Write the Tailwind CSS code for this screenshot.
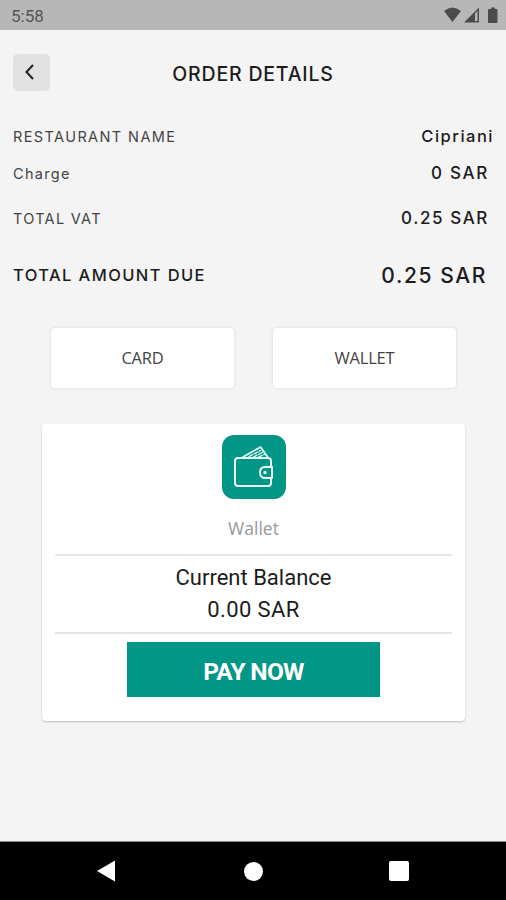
<!DOCTYPE html>
<html lang="en">
<head>
<meta charset="utf-8">
<title>Order Details</title>
<script src="https://cdn.jsdelivr.net/npm/@tailwindcss/browser@4"></script>
</head>
<body class="w-[506px] h-[900px] overflow-hidden bg-[#f4f4f4] font-['Inter',sans-serif] text-[#1c1c1c] flex flex-col">
  <div class="h-[30px] shrink-0 bg-[#b7b7b7] flex items-center justify-between pl-[11px] pr-[8px] text-[#555]">
    <span class="font-['Roboto',sans-serif] text-[17px] leading-[20px] pt-[2px]">5:58</span>
    <svg class="w-[56px] h-[18px]" viewBox="0 0 56 18" fill="#4b4b4b">
      <path d="M2 5Q10.500 -2 19 5L10.500 16Z"/>
      <path d="M37 1.500V16.500H22Z"/><path d="M33 7.500L35.500 5V15H33Z" fill="#b7b7b7"/>
      <path d="M47 3H49V1.500H53V3H54.500Q55.500 3 55.500 4V16Q55.500 17 54.500 17H47Q46 17 46 16V4Q46 3 47 3Z"/>
    </svg>
  </div>
  <header class="h-[88px] shrink-0 grid grid-cols-[37px_1fr_37px] items-center px-[13px] pb-[4px]">
    <button class="w-[37px] h-[37px] rounded-[5px] bg-[#e1e1e1] flex items-center justify-center pr-[3px]">
      <svg class="w-[16px] h-[18px]" viewBox="0 0 16 18" fill="none" stroke="#222" stroke-width="2"><path d="M11 2L4.500 9L11 16"/></svg>
    </button>
    <h1 class="text-center text-[19.500px] leading-[24px] font-medium pt-[3px] whitespace-nowrap tracking-[0.8px]">ORDER DETAILS</h1>
  </header>
  <section class="shrink-0 pl-[13px] whitespace-nowrap">
    <div class="h-[36px] flex items-center justify-between pr-[12px] pt-[1px]">
      <span class="text-[14.500px] text-[#444] tracking-[1.4px]">RESTAURANT NAME</span>
      <span class="text-[16.500px] font-medium tracking-[1.5px]">Cipriani</span>
    </div>
    <div class="h-[38px] flex items-center justify-between pr-[17px] pt-[2px]">
      <span class="text-[14.500px] text-[#444] tracking-[1.3px]">Charge</span>
      <span class="text-[17px] font-medium tracking-[1.7px]">0 SAR</span>
    </div>
    <div class="h-[52px] flex items-center justify-between pr-[17px] pt-[2px]">
      <span class="text-[14.500px] text-[#444] tracking-[1.3px]">TOTAL VAT</span>
      <span class="text-[17px] font-medium tracking-[1.6px]">0.25 SAR</span>
    </div>
    <div class="h-[61px] flex items-center justify-between pr-[19px] pt-[1px]">
      <span class="text-[16.500px] font-medium tracking-[1.4px]">TOTAL AMOUNT DUE</span>
      <span class="text-[21px] font-medium tracking-[1.600px] pt-[2px]">0.25 SAR</span>
    </div>
  </section>
  <div class="flex shrink-0 pl-[51px] pt-[23px] gap-[39px] font-['Open_Sans',sans-serif] text-[#444]">
    <button class="w-[183px] h-[60px] rounded-[4px] bg-white shadow-[0_0_2px_1px_#e4e4e4] text-[16.500px] tracking-[-0.200px]">CARD</button>
    <button class="w-[183px] h-[60px] rounded-[4px] bg-white shadow-[0_0_2px_1px_#e4e4e4] text-[16.500px] tracking-[-0.200px]">WALLET</button>
  </div>
  <main class="ml-[42px] mt-[36px] w-[423px] h-[297px] shrink-0 rounded-[4px] bg-white shadow-[0_1px_2px_#bdbdbd] px-[13px] flex flex-col items-center">
    <div class="mt-[11px] w-[64px] h-[64px] shrink-0 rounded-[12px] bg-[#029687]">
      <svg class="w-[64px] h-[64px]" viewBox="0 0 64 64" fill="none" stroke="#e9fbf7" stroke-width="2" stroke-linejoin="round" stroke-linecap="round">
        <path d="M49 32V26Q49 23 46 23H16Q13 23 13 26V48Q13 51 16 51H46Q49 51 49 48V43"/>
        <path d="M50 32H43Q38 32 38 37.500Q38 43 43 43H50Z"/>
        <circle cx="43" cy="37.500" r="0.700"/>
        <path d="M21 22L38.500 12L46 22.500" stroke-width="1.800"/>
        <path d="M27 21.500L38.500 15.500M31.500 22L40.500 17.300M36.500 22L42.500 19.300" stroke-width="1.300" stroke-dasharray="4 1.800"/>
      </svg>
    </div>
    <p class="mt-[17px] h-[24px] leading-[24px] text-[17.500px] text-[#999] font-['Open_Sans',sans-serif]">Wallet</p>
    <div class="mt-[14px] w-full h-[2px] shrink-0 bg-[#e8e8e8]"></div>
    <div class="h-[76px] shrink-0 pt-[6px] text-center font-['Roboto',sans-serif] text-[22px] leading-[32px]">
      <p>Current Balance</p>
      <p class="tracking-[0.4px]">0.00 SAR</p>
    </div>
    <div class="w-full h-[2px] shrink-0 bg-[#e5e5e5]"></div>
    <button class="mt-[8px] w-[253px] h-[55px] shrink-0 bg-[#029687] text-white font-['Roboto',sans-serif] font-bold text-[24.500px] tracking-[-0.7px] pt-[6px]">PAY NOW</button>
  </main>
  <nav class="mt-auto h-[59px] shrink-0 bg-black border-t border-[#888] flex items-center pl-[96px]">
    <svg class="w-[20px] h-[22px]" viewBox="0 0 20 22" fill="#fff"><path d="M1 11L19 0.500V21.500Z"/></svg>
    <span class="ml-[128px] w-[19px] h-[19px] rounded-full bg-white"></span>
    <span class="ml-[126px] w-[20px] h-[20px] rounded-[2px] bg-white"></span>
  </nav>
</body>
</html>
